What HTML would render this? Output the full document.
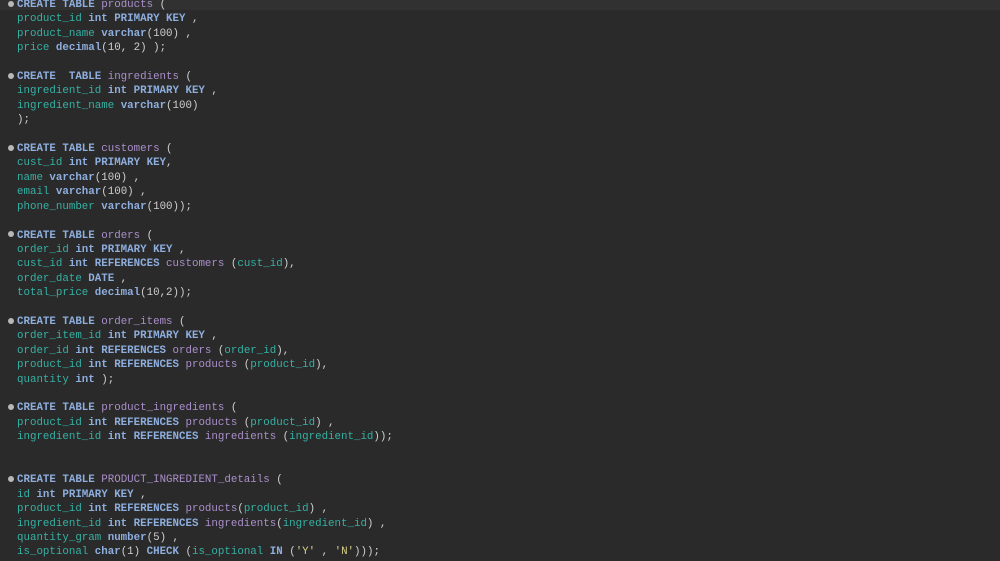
<!DOCTYPE html><html><head><style>
body{margin:0;width:1000px;height:561px;overflow:hidden;background:#2a2a2a;}
.band{position:absolute;left:0;top:0;width:1000px;height:10px;background:#313131}
pre{position:absolute;left:17px;top:-2px;margin:0;font-family:"Liberation Mono",monospace;font-size:10.8px;line-height:14.4px;color:#cfcfcf}
.k{color:#8eaede;font-weight:bold}.c{color:#35b1a4}.t{color:#ab8fcb}.s{color:#d8cf8a}
.d{position:absolute;left:8px;width:6px;height:6px;border-radius:50%;background:#b8b8b8}
</style></head><body><div class="band"></div>
<div class="d" style="top:1px"></div><div class="d" style="top:73px"></div><div class="d" style="top:145px"></div><div class="d" style="top:231px"></div><div class="d" style="top:318px"></div><div class="d" style="top:404px"></div><div class="d" style="top:476px"></div>
<pre><span class="k">CREATE TABLE</span> <span class="t">products</span> (
<span class="c">product_id</span> <span class="k">int PRIMARY KEY</span> ,
<span class="c">product_name</span> <span class="k">varchar</span>(100) ,
<span class="c">price</span> <span class="k">decimal</span>(10, 2) );

<span class="k">CREATE  TABLE</span> <span class="t">ingredients</span> (
<span class="c">ingredient_id</span> <span class="k">int PRIMARY KEY</span> ,
<span class="c">ingredient_name</span> <span class="k">varchar</span>(100)
);

<span class="k">CREATE TABLE</span> <span class="t">customers</span> (
<span class="c">cust_id</span> <span class="k">int PRIMARY KEY</span>,
<span class="c">name</span> <span class="k">varchar</span>(100) ,
<span class="c">email</span> <span class="k">varchar</span>(100) ,
<span class="c">phone_number</span> <span class="k">varchar</span>(100));

<span class="k">CREATE TABLE</span> <span class="t">orders</span> (
<span class="c">order_id</span> <span class="k">int PRIMARY KEY</span> ,
<span class="c">cust_id</span> <span class="k">int REFERENCES</span> <span class="t">customers</span> (<span class="c">cust_id</span>),
<span class="c">order_date</span> <span class="k">DATE</span> ,
<span class="c">total_price</span> <span class="k">decimal</span>(10,2));

<span class="k">CREATE TABLE</span> <span class="t">order_items</span> (
<span class="c">order_item_id</span> <span class="k">int PRIMARY KEY</span> ,
<span class="c">order_id</span> <span class="k">int REFERENCES</span> <span class="t">orders</span> (<span class="c">order_id</span>),
<span class="c">product_id</span> <span class="k">int REFERENCES</span> <span class="t">products</span> (<span class="c">product_id</span>),
<span class="c">quantity</span> <span class="k">int</span> );

<span class="k">CREATE TABLE</span> <span class="t">product_ingredients</span> (
<span class="c">product_id</span> <span class="k">int REFERENCES</span> <span class="t">products</span> (<span class="c">product_id</span>) ,
<span class="c">ingredient_id</span> <span class="k">int REFERENCES</span> <span class="t">ingredients</span> (<span class="c">ingredient_id</span>));


<span class="k">CREATE TABLE</span> <span class="t">PRODUCT_INGREDIENT_details</span> (
<span class="c">id</span> <span class="k">int PRIMARY KEY</span> ,
<span class="c">product_id</span> <span class="k">int REFERENCES</span> <span class="t">products</span>(<span class="c">product_id</span>) ,
<span class="c">ingredient_id</span> <span class="k">int REFERENCES</span> <span class="t">ingredients</span>(<span class="c">ingredient_id</span>) ,
<span class="c">quantity_gram</span> <span class="k">number</span>(5) ,
<span class="c">is_optional</span> <span class="k">char</span>(1) <span class="k">CHECK</span> (<span class="c">is_optional</span> <span class="k">IN</span> (<span class="s">'Y'</span> , <span class="s">'N'</span>)));
</pre></body></html>
